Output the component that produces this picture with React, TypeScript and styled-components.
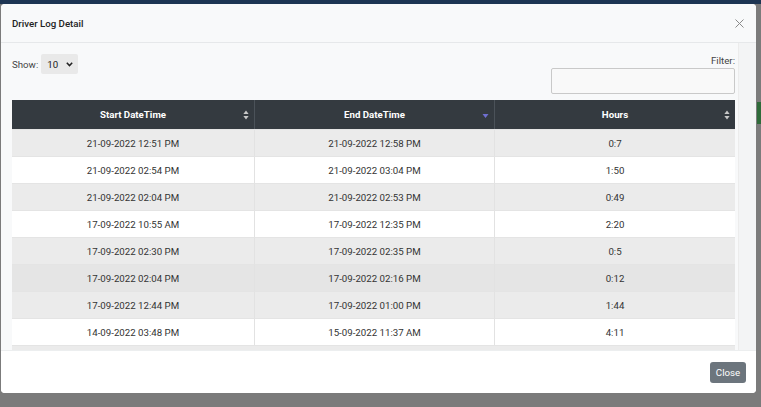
import React from "react";
import styled, { createGlobalStyle } from "styled-components";

const Global = createGlobalStyle`
  html, body { margin: 0; padding: 0; }
  body {
    width: 761px; height: 407px; overflow: hidden;
    background: #7a7a7a;
    font-family: Roboto, "Liberation Sans", Arial, sans-serif;
  }
`;

const Page = styled.div`
  position: relative;
  width: 761px;
  height: 407px;
  background: #7b7b7b;
`;

const TopBar = styled.div`
  height: 4px;
  background: #1d3553;
`;

const SideStrip = styled.div`
  position: absolute;
  right: 0;
  top: 102px;
  width: 4px;
  height: 22px;
  background: #2f6b3a;
`;

const Dialog = styled.div`
  position: absolute;
  left: 1px;
  top: 4px;
  width: 755px;
  height: 389px;
  background: #fff;
  border-radius: 4px;
  display: flex;
  flex-direction: column;
  overflow: hidden;
`;

const Header = styled.div`
  height: 39px;
  flex: none;
  display: flex;
  align-items: center;
  justify-content: space-between;
  padding: 0 11px 0 11px;
  background: #f8f9fa;
  border-bottom: 1px solid #e6e8ea;
  box-sizing: border-box;
`;

const Title = styled.div`
  font-size: 9.7px;
  font-weight: 500;
  color: #222;
`;

const CloseX = styled.button`
  border: 0;
  background: transparent;
  padding: 0;
  width: 12px;
  height: 12px;
  display: flex;
  align-items: center;
  justify-content: center;
`;

const Body = styled.div`
  flex: 1;
  min-height: 0;
  overflow: hidden;
  background: #f8f9fa;
  display: flex;
`;

const Scroll = styled.div`
  flex: 1;
  min-width: 0;
  padding: 11px 0 0 11px;
  box-sizing: border-box;
  overflow: hidden;
`;

const Track = styled.div`
  width: 17px;
  flex: none;
  background: #f3f4f5;
  border-left: 1px solid #ececec;
`;

const Controls = styled.div`
  width: 723px;
  display: flex;
  justify-content: space-between;
  align-items: flex-start;
  height: 46px;
`;

const ShowWrap = styled.div`
  display: flex;
  align-items: center;
  gap: 3px;
  font-size: 9.7px;
  color: #444;
`;

const Select = styled.div`
  width: 37px;
  height: 20px;
  background: #e9e9e9;
  border-radius: 2px;
  display: flex;
  align-items: center;
  justify-content: space-between;
  padding: 0 5px 0 6px;
  box-sizing: border-box;
  font-size: 9.7px;
  color: #222;
`;

const FilterWrap = styled.div`
  display: flex;
  flex-direction: column;
  align-items: flex-end;
  gap: 2px;
  font-size: 9.7px;
  color: #444;
  margin-top: 1px;
`;

const Input = styled.div`
  width: 184px;
  height: 26px;
  box-sizing: border-box;
  border: 1px solid #c9c9c9;
  border-radius: 2px;
  background: #f9f9f9;
`;

const Table = styled.div`
  width: 723px;
  display: grid;
  grid-template-columns: 242px 240px 241px;
`;

const Th = styled.div<{ first?: boolean }>`
  height: 29px;
  background: #343a40;
  color: #fff;
  font-size: 9.7px;
  font-weight: 700;
  display: flex;
  align-items: center;
  justify-content: center;
  position: relative;
  border-left: ${(p) => (p.first ? "none" : "1px solid #4b5259")};
`;

const SortIcon = styled.span`
  position: absolute;
  right: 5px;
  top: 50%;
  transform: translateY(-50%);
  display: flex;
`;

const Td = styled.div<{ shade: string; first?: boolean }>`
  height: 27px;
  box-sizing: border-box;
  background: ${(p) => p.shade};
  border-left: ${(p) => (p.first ? "none" : "1px solid #e2e2e2")};
  border-top: 1px solid #e4e4e4;
  font-size: 9.7px;
  color: #333;
  display: flex;
  align-items: center;
  justify-content: center;
`;

const Filler = styled.div`
  grid-column: 1 / -1;
  height: 8px;
  background: #ebebeb;
  border-top: 1px solid #e4e4e4;
`;

const Footer = styled.div`
  height: 43px;
  flex: none;
  display: flex;
  align-items: center;
  justify-content: flex-end;
  padding: 0 10px;
  background: #fff;
  border-top: 1px solid #eceeef;
  box-sizing: border-box;
`;

const Button = styled.button`
  height: 21px;
  width: 36px;
  padding: 0;
  border: 0;
  border-radius: 3px;
  background: #6c757d;
  color: #fff;
  font-family: inherit;
  font-size: 9.7px;
`;

const rows: [string, string, string, string][] = [
  ["21-09-2022 12:51 PM", "21-09-2022 12:58 PM", "0:7", "#ebebeb"],
  ["21-09-2022 02:54 PM", "21-09-2022 03:04 PM", "1:50", "#ffffff"],
  ["21-09-2022 02:04 PM", "21-09-2022 02:53 PM", "0:49", "#ebebeb"],
  ["17-09-2022 10:55 AM", "17-09-2022 12:35 PM", "2:20", "#ffffff"],
  ["17-09-2022 02:30 PM", "17-09-2022 02:35 PM", "0:5", "#ebebeb"],
  ["17-09-2022 02:04 PM", "17-09-2022 02:16 PM", "0:12", "#e5e5e5"],
  ["17-09-2022 12:44 PM", "17-09-2022 01:00 PM", "1:44", "#ebebeb"],
  ["14-09-2022 03:48 PM", "15-09-2022 11:37 AM", "4:11", "#ffffff"],
];

const Both = () => (
  <svg width="6" height="10" viewBox="0 0 6 10">
    <path d="M3 0.5 L5.6 4 H0.4 Z" fill="#c8c8c8" />
    <path d="M3 9.5 L5.6 6 H0.4 Z" fill="#c8c8c8" />
  </svg>
);

const Down = () => (
  <svg width="7" height="10" viewBox="0 0 7 10">
    <path d="M0.5 4 H6.5 L3.5 8 Z" fill="#6f6fd0" />
  </svg>
);

export default function App() {
  return (
    <Page>
      <Global />
      <TopBar />
      <SideStrip />
      <Dialog>
        <Header>
          <Title>Driver Log Detail</Title>
          <CloseX aria-label="close">
            <svg width="9" height="9" viewBox="0 0 9 9">
              <path d="M0.5 0.5 L8.5 8.5 M8.5 0.5 L0.5 8.5" stroke="#8a8a8a" strokeWidth="1" />
            </svg>
          </CloseX>
        </Header>
        <Body>
          <Scroll>
            <Controls>
              <ShowWrap>
                Show:
                <Select>
                  10
                  <svg width="7" height="5" viewBox="0 0 7 5">
                    <path d="M0.8 0.8 L3.5 3.6 L6.2 0.8" stroke="#222" strokeWidth="1.5" fill="none" />
                  </svg>
                </Select>
              </ShowWrap>
              <FilterWrap>
                Filter:
                <Input />
              </FilterWrap>
            </Controls>
            <Table>
              <Th first>
                Start DateTime
                <SortIcon><Both /></SortIcon>
              </Th>
              <Th>
                End DateTime
                <SortIcon><Down /></SortIcon>
              </Th>
              <Th>
                Hours
                <SortIcon><Both /></SortIcon>
              </Th>
              {rows.map((r, i) => (
                <React.Fragment key={i}>
                  <Td shade={r[3]} first>{r[0]}</Td>
                  <Td shade={r[3]}>{r[1]}</Td>
                  <Td shade={r[3]}>{r[2]}</Td>
                </React.Fragment>
              ))}
              <Filler />
            </Table>
          </Scroll>
          <Track />
        </Body>
        <Footer>
          <Button>Close</Button>
        </Footer>
      </Dialog>
    </Page>
  );
}
